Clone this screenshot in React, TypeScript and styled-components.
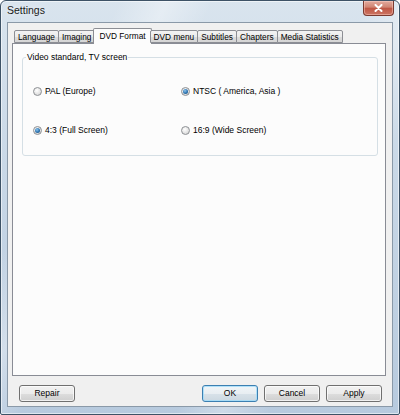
import React from 'react';
import styled, { createGlobalStyle } from 'styled-components';

const GlobalStyle = createGlobalStyle`
  html, body {
    margin: 0;
    padding: 0;
    background: #ffffff;
  }
  * {
    box-sizing: border-box;
  }
`;

const Window = styled.div`
  width: 400px;
  height: 415px;
  display: flex;
  flex-direction: column;
  border: 1px solid #3d5266;
  border-radius: 6px 6px 2px 2px;
  background:
    linear-gradient(115deg, rgba(255, 255, 255, 0) 20%, rgba(255, 255, 255, 0.35) 28%, rgba(255, 255, 255, 0) 36%, rgba(255, 255, 255, 0) 62%, rgba(255, 255, 255, 0.3) 70%, rgba(255, 255, 255, 0) 78%),
    linear-gradient(180deg, #d9e4ee 0%, #c9d8e7 40%, #b7cade 100%);
  box-shadow: inset 0 0 0 1px rgba(255, 255, 255, 0.55);
  font-family: "Liberation Sans", Arial, sans-serif;
  font-size: 8.5px;
  color: #000;
`;

const TitleBar = styled.div`
  height: 21px;
  display: flex;
  align-items: flex-start;
  padding-left: 6px;
`;

const Title = styled.div`
  font-size: 10.5px;
  line-height: 19px;
  color: #1a1a1a;
  text-shadow: 0 0 6px rgba(255, 255, 255, 0.9);
`;

const CloseButton = styled.div`
  margin-left: auto;
  margin-right: 5px;
  width: 31px;
  height: 15px;
  display: flex;
  align-items: center;
  justify-content: center;
  border: 1px solid #7a3a30;
  border-top: none;
  border-radius: 0 0 4px 4px;
  background: linear-gradient(180deg, #e3aa9e 0%, #d08472 45%, #bf5644 50%, #cc7462 100%);
  box-shadow: inset 0 0 0 1px rgba(255, 215, 205, 0.45);
`;

const Client = styled.div`
  flex: 1;
  margin: 0 6px 7px 6px;
  border: 1px solid #8a99a8;
  background: #f0f0f0;
  display: flex;
  flex-direction: column;
  padding: 5px 6px 4px 4px;
`;

const TabStrip = styled.div`
  height: 15px;
  display: flex;
  align-items: flex-end;
  padding-left: 2px;
  position: relative;
  z-index: 1;
`;

const Tab = styled.div<{ $active?: boolean }>`
  height: ${(p) => (p.$active ? '16px' : '13px')};
  margin-bottom: ${(p) => (p.$active ? '-1px' : '0')};
  margin-left: ${(p) => (p.$active ? '-2px' : '-1px')};
  margin-right: ${(p) => (p.$active ? '-1px' : '0')};
  padding: 0 ${(p) => (p.$active ? '5px' : '3px')};
  display: flex;
  align-items: center;
  border: 1px solid #8c8e94;
  border-bottom: ${(p) => (p.$active ? 'none' : '1px solid #8c8e94')};
  border-radius: 2px 2px 0 0;
  background: ${(p) =>
    p.$active ? '#fcfcfc' : 'linear-gradient(180deg, #f3f3f3 0%, #ebebeb 50%, #dddddd 51%, #d5d5d5 100%)'};
  white-space: nowrap;
  line-height: 1;
  font-size: 8.3px;
  padding-top: ${(p) => (p.$active ? '0' : '1px')};
  &:first-child {
    margin-left: 0;
  }
`;

const Panel = styled.div`
  flex: 1;
  border: 1px solid #898c95;
  background: #fcfcfc;
  padding: 8px 7px 0 9px;
`;

const Group = styled.fieldset`
  margin: 0;
  padding: 24px 0 19px 10px;
  border: 1px solid #d5dfe5;
  border-radius: 3px;
  display: grid;
  grid-template-columns: 148px 1fr;
  row-gap: 28px;
`;

const Legend = styled.legend`
  padding: 0 1px;
  margin-left: -7px;
  line-height: 10px;
`;

const Option = styled.label`
  display: flex;
  align-items: center;
  gap: 3px;
  height: 11px;
  line-height: 1;
`;

const RadioDot = styled.span<{ $checked?: boolean }>`
  width: 9px;
  height: 9px;
  border-radius: 50%;
  border: 1px solid #8d9094;
  background: radial-gradient(circle at 40% 35%, #ffffff 0%, #e4e4e4 55%, #cfcfcf 100%);
  display: flex;
  align-items: center;
  justify-content: center;
  &::after {
    content: '';
    display: ${(p) => (p.$checked ? 'block' : 'none')};
    width: 5px;
    height: 5px;
    border-radius: 50%;
    background: radial-gradient(circle at 40% 35%, #8cc4ee 0%, #2e74b0 55%, #16456f 100%);
  }
`;

const Footer = styled.div`
  margin-top: 9px;
  height: 17px;
  display: flex;
  gap: 6px;
  padding: 0 4px 0 7px;
`;

const Button = styled.div<{ $default?: boolean }>`
  width: 56px;
  height: 17px;
  display: flex;
  align-items: center;
  justify-content: center;
  border: 1px solid ${(p) => (p.$default ? '#3c7fb1' : '#707070')};
  border-radius: 3px;
  background: ${(p) =>
    p.$default
      ? 'linear-gradient(180deg, #f0f5f8 0%, #e8eef2 50%, #d8e2e9 51%, #ccd8e1 100%)'
      : 'linear-gradient(180deg, #f2f2f2 0%, #ebebeb 50%, #dddddd 51%, #cfcfcf 100%)'};
  box-shadow: inset 0 0 0 1px ${(p) => (p.$default ? 'rgba(160, 220, 250, 0.8)' : 'rgba(255, 255, 255, 0.7)')};
  line-height: 1;
`;

const Spacer = styled.div`
  flex: 1;
`;

const tabs = ['Language', 'Imaging', 'DVD Format', 'DVD menu', 'Subtitles', 'Chapters', 'Media Statistics'];

const options = [
  { label: 'PAL (Europe)', checked: false },
  { label: 'NTSC ( America, Asia )', checked: true },
  { label: '4:3 (Full Screen)', checked: true },
  { label: '16:9 (Wide Screen)', checked: false },
];

const App: React.FC = () => {
  return (
    <>
      <GlobalStyle />
      <Window>
        <TitleBar>
          <Title>Settings</Title>
          <CloseButton>
            <svg width="9" height="8" viewBox="0 0 9 8">
              <path d="M1.5 1 L7.5 7 M7.5 1 L1.5 7" stroke="#ffffff" strokeWidth="2" strokeLinecap="round" />
            </svg>
          </CloseButton>
        </TitleBar>
        <Client>
          <TabStrip>
            {tabs.map((t) => (
              <Tab key={t} $active={t === 'DVD Format'}>
                {t}
              </Tab>
            ))}
          </TabStrip>
          <Panel>
            <Group>
              <Legend>Video standard, TV screen</Legend>
              {options.map((o) => (
                <Option key={o.label}>
                  <RadioDot $checked={o.checked} />
                  {o.label}
                </Option>
              ))}
            </Group>
          </Panel>
          <Footer>
            <Button>Repair</Button>
            <Spacer />
            <Button $default>OK</Button>
            <Button>Cancel</Button>
            <Button>Apply</Button>
          </Footer>
        </Client>
      </Window>
    </>
  );
};

export default App;
